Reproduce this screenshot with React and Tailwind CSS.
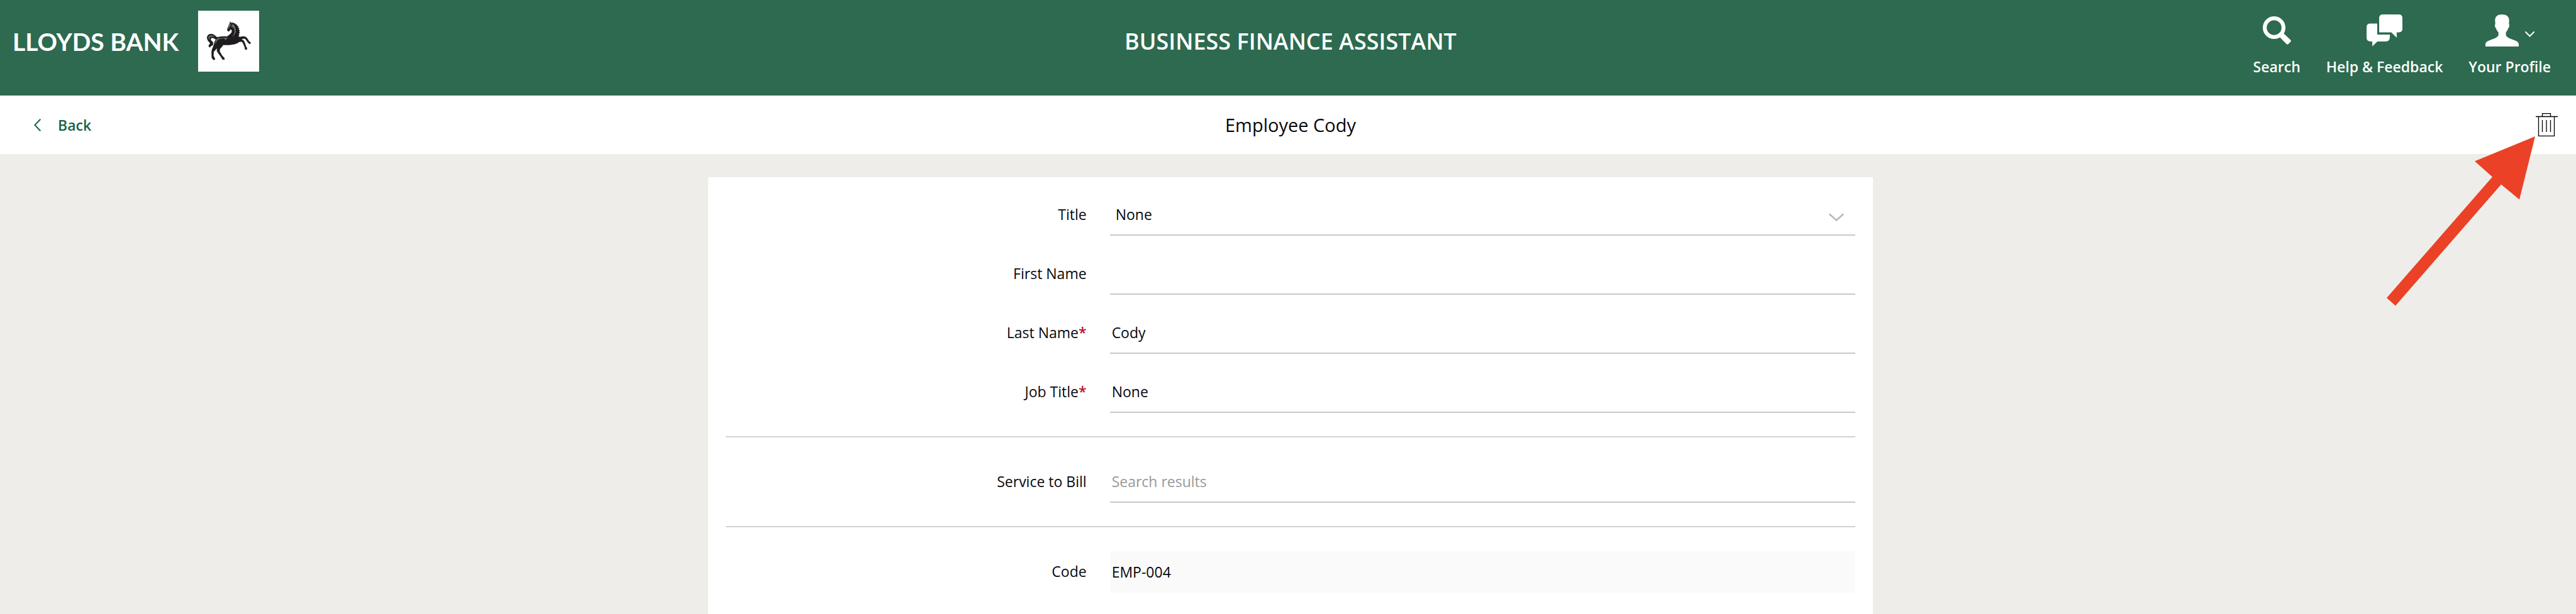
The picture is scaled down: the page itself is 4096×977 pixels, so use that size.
import React from 'react';

function HorseMark() {
  return (
    <svg viewBox="52 25 311 311" className="size-[97px] bg-white" aria-hidden="true">
      <g fill="#1d1b1d" stroke="#1d1b1d" strokeWidth="2" strokeLinejoin="round">
        <path d="M216 82 L222 88 L230 86 L233 90 L240 90 L241 95 L249 96 L248 101 L256 104 L254 110 L261 114 L258 120 L264 126 L260 131 L264 138 L259 142 L261 150 L256 156 L266 160 Q278 155 290 157 Q298 160 303 168 L312 182 L319 187 L319 193 L312 193 L304 184 L294 170 Q288 165 280 168 L272 172 L282 176 Q288 182 290 190 L296 208 L301 216 L300 223 L292 223 L290 212 L281 190 L274 182 L262 184 Q252 192 236 196 Q206 202 180 199 Q172 212 163 220 L161 232 L174 254 L186 267 L186 274 L177 274 L170 262 L156 243 L148 230 L150 216 Q138 224 131 236 L130 256 L137 268 L137 275 L129 275 L122 265 L121 236 Q122 222 128 212 Q131 203 134 195 Q136 182 143 172 Q132 164 124 163 Q114 165 116 174 Q120 180 126 184 Q131 192 126 201 L119 204 L112 212 L106 207 L108 199 Q115 196 113 189 Q101 180 98 166 Q97 151 110 145 Q126 141 138 152 Q143 158 150 161 Q172 155 200 157 Q216 147 222 138 Q228 127 222 121 Q214 119 213 126 Q210 132 204 129 Q199 125 203 114 L210 98 L212 92 Z" />
      </g>
      <path d="M229 92 Q246 108 244 132 Q240 150 224 160 Q243 138 236 118 Q232 108 220 106 Z" fill="#6b6b6e" />
      <path d="M148 168 Q172 161 204 163 Q194 174 188 177 Q192 169 184 167 Q166 166 152 174 Q143 183 141 198 Q138 178 148 168 Z" fill="#6b6b6e" />
      <path d="M104 164 Q105 151 119 150 Q130 151 137 159 Q119 154 111 162 Q108 168 111 175 Q105 171 104 164 Z" fill="#6b6b6e" />
      <path d="M213 91 L217 87 L219 97 L208 117 L205 116 Z" fill="#6b6b6e" />
    </svg>
  );
}

function SearchIcon() {
  return (
    <svg viewBox="0 0 145 145" className="w-[45px] shrink-0" aria-hidden="true">
      <circle cx="58" cy="58" r="48" fill="none" stroke="#fff" strokeWidth="20" />
      <path d="M88 108 L107 88 L142 121 Q147 126 142 131 L131 142 Q126 147 121 142 Z" fill="#fff" />
    </svg>
  );
}

function ChatIcon() {
  return (
    <svg viewBox="0 0 182 162" className="w-[57px] shrink-0" fill="#fff" aria-hidden="true">
      <path d="M82 0 H164 Q182 0 182 18 V73 Q182 91 164 91 H153 V118 L126 91 H64 V18 Q64 0 82 0 Z" />
      <path d="M18 46 H54 V102 H118 V118 Q116 137 98 137 H55 L29 162 V137 H18 Q0 135 0 118 V64 Q0 46 18 46 Z" />
    </svg>
  );
}

function PersonIcon() {
  return (
    <svg viewBox="0 0 169 164" className="w-[53px] shrink-0" fill="#fff" aria-hidden="true">
      <path d="M84 0 C108 0 122 12 120 34 L119 49 C124 52 121 66 116 69 C113 79 109 84 104 90 V106 C110 118 128 124 145 130 C160 136 169 141 169 152 V164 H0 V152 C0 141 9 136 24 130 C41 124 60 118 66 106 V90 C60 84 56 79 53 69 C48 66 46 52 50 49 L49 34 C47 12 60 0 84 0 Z" />
    </svg>
  );
}

function TrashIcon() {
  return (
    <svg viewBox="0 0 35 37" className="h-[37px] w-[35px]" fill="none" stroke="#000" aria-hidden="true">
      <path d="M0 5.5 H35 M10.5 5.5 V0.7 H23.5 V5.5 M4.5 5.5 V36.3 H29.5 V5.5" strokeWidth="1.3" />
      <path d="M10.5 11 V30 M17 11 V30 M23.5 11 V30" strokeWidth="1.3" />
    </svg>
  );
}

function NavItem({ label, children }) {
  return (
    <button type="button" className="flex flex-col items-center gap-[18px] text-[23px] leading-7 font-semibold">
      <span className="flex h-[51px] items-center gap-[10px]">{children}</span>
      {label}
    </button>
  );
}

function Row({ id, label, required, children }) {
  return (
    <div className="grid grid-cols-[34%_66%] items-center">
      <label htmlFor={id} className="pr-[37px] pb-[2px] text-right">
        {label}
        {required && <span className="font-semibold text-[#b5122f]">*</span>}
      </label>
      {children}
    </div>
  );
}

const field = 'h-[66px] w-full border-b-2 border-[#c8c8c8] bg-white px-[3px] outline-none placeholder:text-[#999999]';

export default function App() {
  return (
    <div className="flex min-h-screen flex-col bg-[#eeede9] font-['Open_Sans','Noto_Sans',sans-serif] text-[23px] leading-7 text-[#08090d]">
      <header className="grid h-[152px] grid-cols-[1fr_auto_1fr] bg-[#2d6a4f] text-white">
        <a href="#home" className="flex items-center gap-[31px] self-start pt-[17px] pl-5">
          <span className="font-['Lato',sans-serif] text-[39px] leading-[48px] font-bold">LLOYDS BANK</span>
          <HorseMark />
        </a>
        <h1 className="self-start pt-[42px] pl-2 text-[36px] leading-[48px] font-semibold">BUSINESS FINANCE ASSISTANT</h1>
        <nav className="flex items-start justify-end gap-[41px] pt-[23px] pr-10">
          <NavItem label="Search">
            <SearchIcon />
          </NavItem>
          <NavItem label="Help & Feedback">
            <ChatIcon />
          </NavItem>
          <NavItem label="Your Profile">
            <PersonIcon />
            <svg viewBox="0 0 15 9" className="mt-3 w-[15px]" fill="none" stroke="#fff" strokeWidth="2" strokeLinecap="round" aria-hidden="true">
              <path d="M1 1 L7.5 7.5 L14 1" />
            </svg>
          </NavItem>
        </nav>
      </header>

      <div className="relative grid h-[93px] grid-cols-[1fr_auto_1fr] items-center bg-white">
        <a href="#back" className="flex items-center gap-[27px] justify-self-start pl-[54px] font-semibold text-[#1a6347]">
          <svg viewBox="0 0 11 20" className="w-[11px]" fill="none" stroke="currentColor" strokeWidth="2" aria-hidden="true">
            <path d="M10.3 0.7 L1.4 10 L10.3 19.3" />
          </svg>
          Back
        </a>
        <h2 className="pl-2 text-[29px] leading-10">Employee Cody</h2>
        <button type="button" aria-label="Delete employee" className="mr-[29px] justify-self-end">
          <TrashIcon />
        </button>
        <svg viewBox="0 0 236 270" className="pointer-events-none absolute top-[65px] right-[65px] w-[236px]" aria-hidden="true">
          <path d="M236 0 L140 39.5 L168 64.5 L0 257 L14 269.5 L182 76.5 L211 100.5 Z" fill="#eb4126" />
        </svg>
      </div>

      <main className="flex grow justify-center pt-[37px] pl-2">
        <form className="w-full max-w-[1852px] bg-white px-7 pt-[27px]">
          <div className="flex flex-col gap-7">
            <Row id="title" label="Title">
              <div className="grid items-center">
                <select id="title" className="col-start-1 row-start-1 h-[66px] w-full appearance-none border-b-2 border-[#c8c8c8] bg-white px-[9px] outline-none">
                  <option>None</option>
                </select>
                <svg viewBox="0 0 24 14" className="pointer-events-none col-start-1 row-start-1 mt-2 mr-[18px] w-6 justify-self-end" fill="none" stroke="#b5b5b5" strokeWidth="2.4" aria-hidden="true">
                  <path d="M0.8 1.5 L12 11.5 L23.2 1.5" />
                </svg>
              </div>
            </Row>
            <Row id="first" label="First Name">
              <input id="first" type="text" className={field} />
            </Row>
            <Row id="last" label="Last Name" required>
              <input id="last" type="text" defaultValue="Cody" className={field} />
            </Row>
            <Row id="job" label="Job Title" required>
              <input id="job" type="text" defaultValue="None" className={field} />
            </Row>
          </div>
          <hr className="mt-[37px] mb-[38px] border-t-2 border-[#d2d2d2]" />
          <Row id="service" label="Service to Bill">
            <input id="service" type="text" placeholder="Search results" className={field} />
          </Row>
          <hr className="mt-[37px] mb-[38px] border-t-2 border-[#d2d2d2]" />
          <Row id="code" label="Code">
            <input id="code" type="text" readOnly defaultValue="EMP-004" className="h-[66px] w-full bg-[#fafafa] px-[3px] outline-none" />
          </Row>
        </form>
      </main>
    </div>
  );
}
